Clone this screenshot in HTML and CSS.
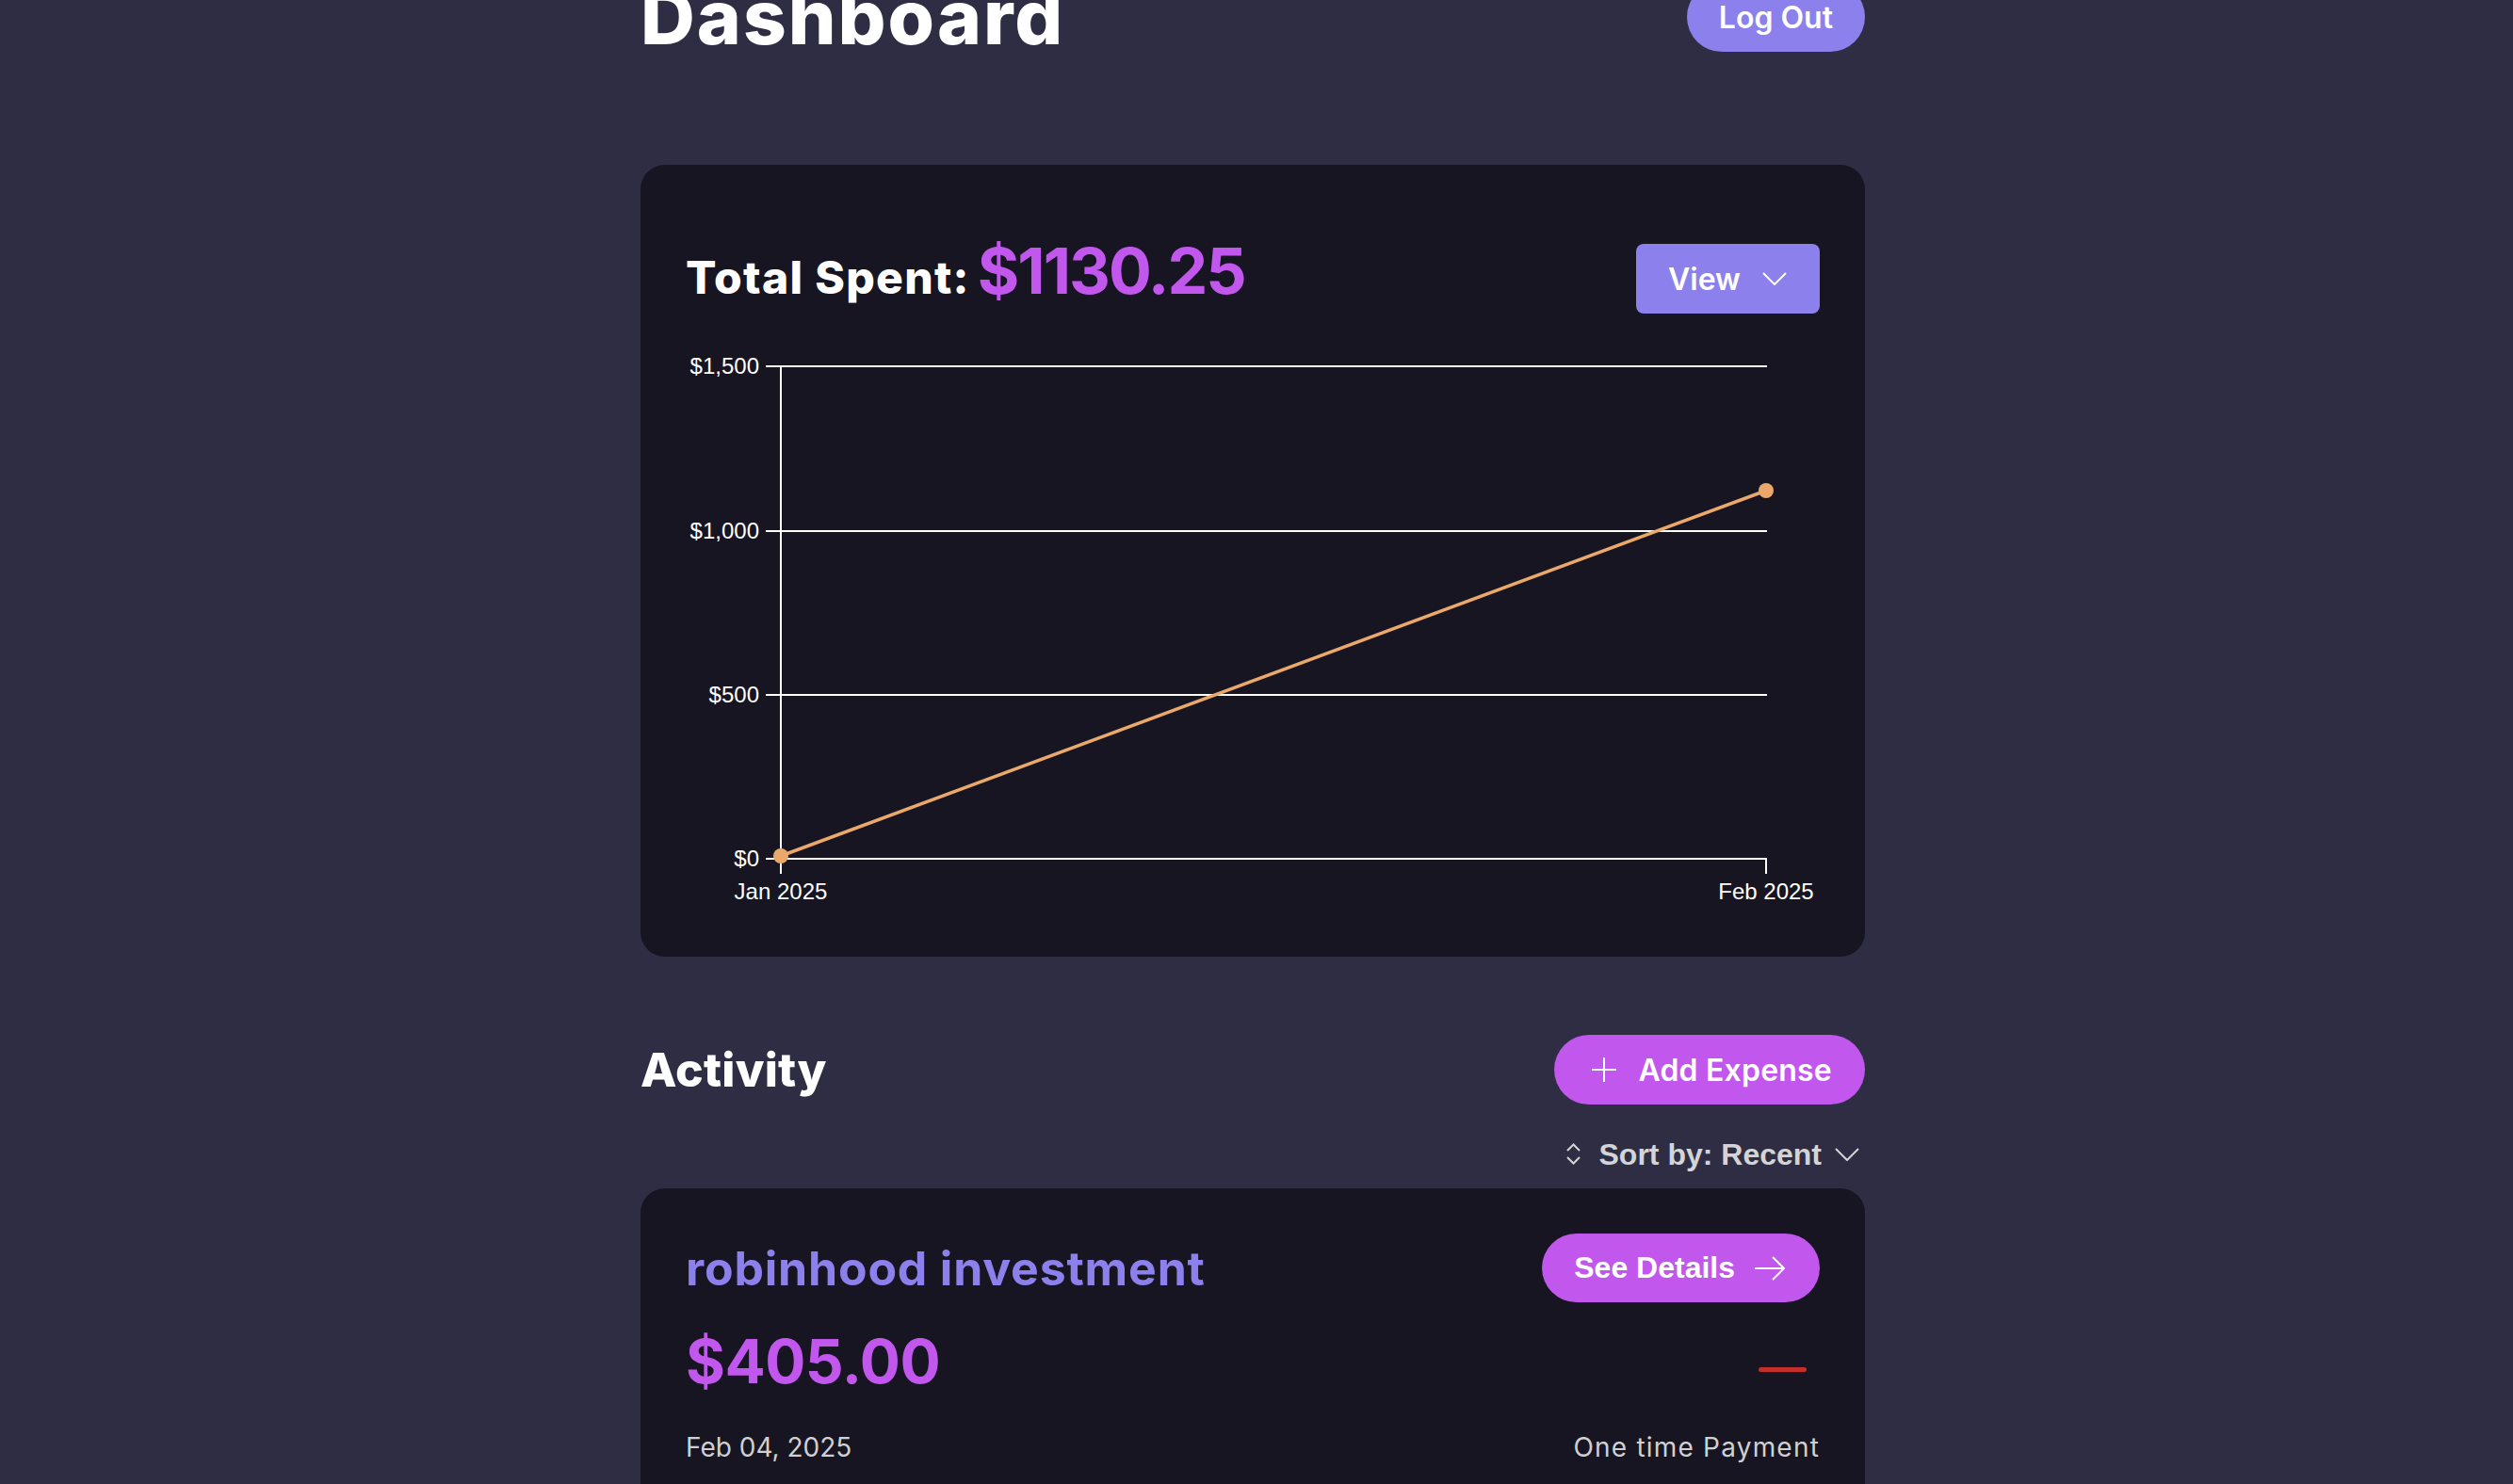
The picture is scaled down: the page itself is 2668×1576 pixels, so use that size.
FILE: index.html
```html
<!DOCTYPE html>
<html lang="en">
<head>
<meta charset="utf-8">
<title>Dashboard</title>
<link rel="stylesheet" href="styles.css">
</head>
<body>
<main class="page">
  <header class="top-bar">
    <h1 class="page-title">Dashboard</h1>
    <button class="btn btn-lavender btn-pill logout">Log Out</button>
  </header>

  <section class="card chart-card">
    <div class="chart-head">
      <h2 class="total"><span class="total-label">Total Spent:</span><span class="total-amount">$1130.25</span></h2>
      <button class="btn btn-lavender view-btn">View
        <svg class="icon chevron" width="26" height="14" viewBox="0 0 26 14"><path d="M1 1 L13 13 L25 1" fill="none" stroke="#fff" stroke-width="2"/></svg>
      </button>
    </div>
    <svg class="chart" viewBox="0 0 1204 600" width="1204" height="600">
      <g stroke="#fff" stroke-width="2">
        <line x1="101" y1="21" x2="1148" y2="21"/>
        <line x1="101" y1="196" x2="1148" y2="196"/>
        <line x1="101" y1="370" x2="1148" y2="370"/>
        <line x1="101" y1="544" x2="1148" y2="544"/>
        <line x1="101" y1="21" x2="101" y2="560"/>
        <line x1="1147" y1="544" x2="1147" y2="560"/>
        <line x1="85" y1="21" x2="101" y2="21"/>
        <line x1="85" y1="196" x2="101" y2="196"/>
        <line x1="85" y1="370" x2="101" y2="370"/>
        <line x1="85" y1="544" x2="101" y2="544"/>
      </g>
      <g class="axis-text" fill="#fff" font-size="24">
        <text x="78" y="29" text-anchor="end">$1,500</text>
        <text x="78" y="204" text-anchor="end">$1,000</text>
        <text x="78" y="378" text-anchor="end">$500</text>
        <text x="78" y="552" text-anchor="end">$0</text>
        <text x="101" y="587" text-anchor="middle">Jan 2025</text>
        <text x="1147" y="587" text-anchor="middle">Feb 2025</text>
      </g>
      <line x1="101" y1="541" x2="1147" y2="153" stroke="#eaa96b" stroke-width="3.5"/>
      <circle cx="101" cy="541" r="8" fill="#eaa96b"/>
      <circle cx="1147" cy="153" r="8" fill="#eaa96b"/>
    </svg>
  </section>

  <section class="activity">
    <div class="activity-head">
      <h2 class="section-title">Activity</h2>
      <button class="btn btn-purple btn-pill add-btn">
        <svg class="icon" width="26" height="26" viewBox="0 0 26 26"><path d="M13 0 V26 M0 13 H26" fill="none" stroke="#fff" stroke-width="2"/></svg>
        Add Expense
      </button>
    </div>
    <div class="sort-row">
      <svg class="icon" width="15" height="23" viewBox="0 0 15 23"><path d="M1 8 L7.5 1.5 L14 8 M1 15 L7.5 21.5 L14 15" fill="none" stroke="#d4d4d8" stroke-width="2"/></svg>
      <span class="sort-text">Sort by: Recent</span>
      <svg class="icon" width="26" height="14" viewBox="0 0 26 14"><path d="M1 1 L13 13 L25 1" fill="none" stroke="#d4d4d8" stroke-width="2"/></svg>
    </div>

    <article class="card expense-card">
      <div class="exp-row exp-top">
        <h3 class="exp-name">robinhood investment</h3>
        <button class="btn btn-purple btn-pill details-btn">See Details
          <svg class="icon" width="32" height="26" viewBox="0 0 32 26"><path d="M0 13 H31 M19 1 L31 13 L19 25" fill="none" stroke="#fff" stroke-width="2"/></svg>
        </button>
      </div>
      <div class="exp-row exp-mid">
        <span class="exp-amount">$405.00</span>
        <span class="dash"></span>
      </div>
      <div class="exp-row exp-bottom">
        <span class="exp-date">Feb 04, 2025</span>
        <span class="exp-type">One time Payment</span>
      </div>
    </article>
  </section>
</main>
</body>
</html>
```

FILE: styles.css
```css
* { box-sizing: border-box; }

html, body {
  margin: 0;
  background: #2f2d43;
}

body {
  padding-right: 8px;
  font-family: Inter, "Noto Sans", sans-serif;
  color: #fff;
  overflow: hidden;
}

.page {
  width: 1300px;
  margin: 0 auto;
}

h1, h2, h3 { margin: 0; }

.top-bar {
  display: flex;
  justify-content: space-between;
  align-items: center;
  margin-top: -19px;
  height: 74px;
}

.page-title {
  font-size: 80px;
  line-height: 1;
  font-weight: 800;
  letter-spacing: 2px;
  margin-left: 0;
}

.btn {
  border: 0;
  color: #fff;
  font-family: Inter, "Noto Sans", sans-serif;
  font-weight: 600;
  font-size: 32px;
  display: inline-flex;
  align-items: center;
  height: 74px;
  cursor: pointer;
}

.btn-pill { border-radius: 999px; }
.btn-lavender { background: #8b80ec; }
.btn-purple { background: #c157ec; }

.logout {
  padding: 0 34px;
}

.card {
  background: #171521;
  border-radius: 26px;
  padding: 48px;
}

.chart-card {
  margin-top: 120px;
  height: 841px;
}

.chart-head {
  display: flex;
  justify-content: space-between;
  align-items: flex-start;
  margin-top: 36px;
  height: 74px;
}

.total {
  display: flex;
  align-items: baseline;
  gap: 8px;
  margin-top: -6px;
  line-height: 1;
  font-weight: 700;
}

.total-label {
  font-size: 48px;
  font-weight: 800;
  letter-spacing: 1.3px;
}

.total-amount {
  font-size: 68px;
  color: #c157ec;
  letter-spacing: -2px;
}

.view-btn {
  width: 195px;
  border-radius: 8px;
  padding: 0 0 0 34px;
  gap: 23px;
}

.chart {
  display: block;
  margin-top: 35px;
  font-family: "Liberation Sans", Arial, sans-serif;
}

.activity {
  margin-top: 83px;
}

.activity-head {
  display: flex;
  justify-content: space-between;
  align-items: center;
  height: 74px;
}

.section-title {
  font-size: 50px;
  line-height: 1;
  font-weight: 800;
  letter-spacing: 0.2px;
}

.add-btn {
  padding: 0 35px 0 40px;
  gap: 23px;
  letter-spacing: 0.2px;
}

.sort-row {
  display: flex;
  justify-content: flex-end;
  align-items: center;
  margin-top: 37px;
  margin-bottom: 21px;
  padding-right: 6px;
  height: 31px;
  gap: 14px;
  color: #d4d4d8;
}

.sort-text {
  font-family: "Liberation Sans", Arial, sans-serif;
  font-weight: 700;
  font-size: 32px;
  line-height: 1;
  margin-left: 6px;
}

.icon { display: block; flex: none; }

.expense-card {
  padding-bottom: 60px;
}

.exp-row {
  display: flex;
  justify-content: space-between;
  align-items: center;
}

.exp-top { height: 73px; }

.exp-name {
  font-size: 50px;
  line-height: 1;
  font-weight: 700;
  color: #8b80ec;
  letter-spacing: 0.8px;
}

.details-btn {
  height: 73px;
  padding: 0 37px 0 34px;
  gap: 21px;
  font-family: "Liberation Sans", Arial, sans-serif;
  font-weight: 700;
  font-size: 32px;
}

.exp-mid {
  margin-top: 31px;
  height: 64px;
}

.exp-amount {
  font-size: 64px;
  line-height: 1;
  font-weight: 700;
  color: #c157ec;
  letter-spacing: -0.5px;
}

.dash {
  width: 51px;
  height: 5px;
  border-radius: 3px;
  background: #c52f2b;
  margin: 17px 14px 0 0;
}

.exp-bottom {
  margin-top: 45px;
  font-size: 28px;
  line-height: 1;
  color: #d0d0d4;
}

.exp-type {
  letter-spacing: 1.2px;
}
```
